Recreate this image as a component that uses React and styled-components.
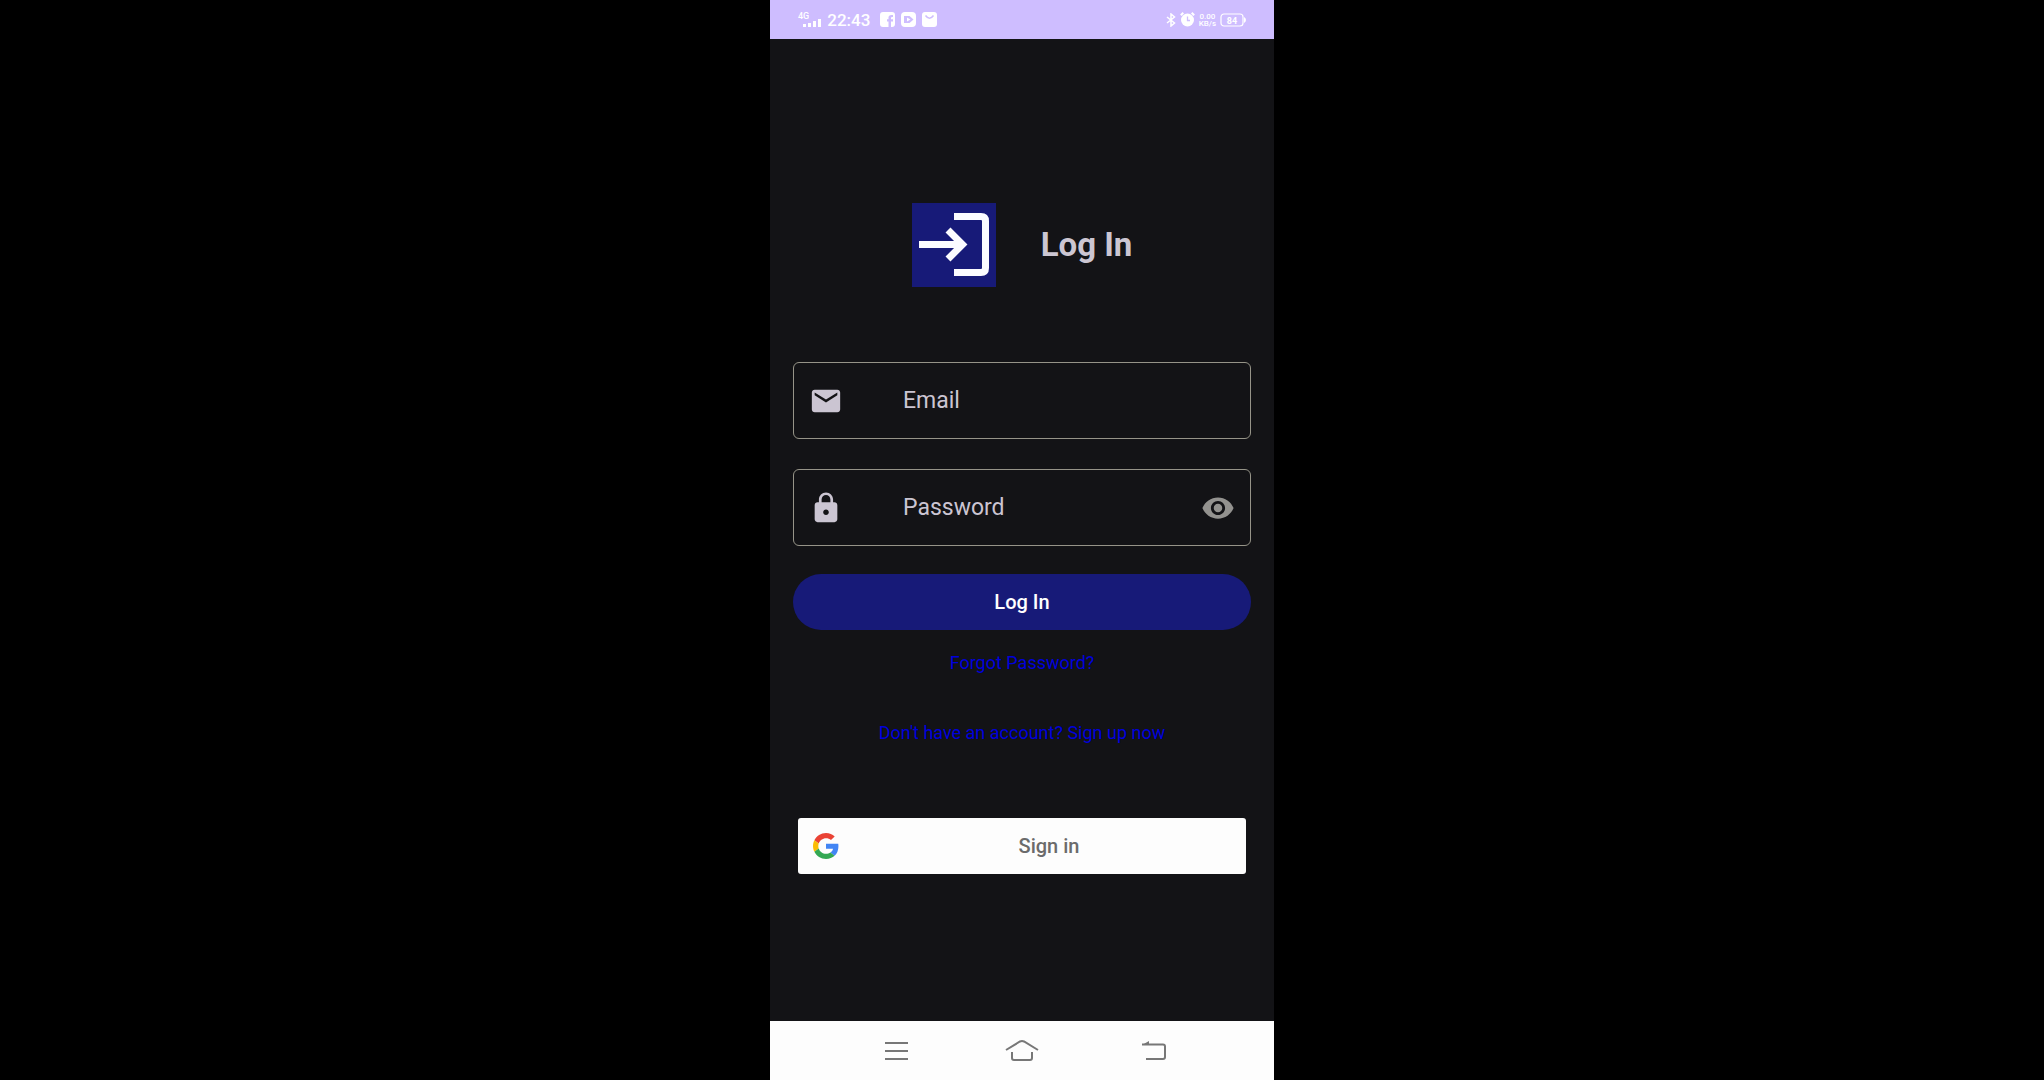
import React, { useState } from "react";
import styled, { createGlobalStyle } from "styled-components";

const GlobalStyle = createGlobalStyle`
  *, *::before, *::after { box-sizing: border-box; }
  body {
    margin: 0;
    background: #000000;
    font-family: Roboto, "Liberation Sans", sans-serif;
  }
`;

const Phone = styled.div`
  display: flex;
  flex-direction: column;
  width: 100%;
  max-width: 504px;
  min-height: 100vh;
  margin: 0 auto;
  background: #131316;
`;

const StatusBar = styled.header`
  display: flex;
  align-items: center;
  justify-content: space-between;
  height: 39px;
  padding: 0 28px;
  background: #cebdff;
  color: #ffffff;
`;

const StatusGroup = styled.div`
  display: flex;
  align-items: center;
  gap: ${(p) => p.$gap}px;
`;

const Signal = styled.div`
  display: flex;
  align-items: flex-end;
  height: 14px;
`;

const TinyText = styled.span`
  font-size: 9px;
  line-height: 7px;
  font-weight: 500;
  text-align: center;
`;

const NetworkType = styled(TinyText)`
  align-self: flex-start;
  margin-right: -6px;
`;

const Speed = styled(TinyText)`
  display: flex;
  flex-direction: column;
  font-size: 8px;
`;

const Clock = styled.time`
  margin-right: 4px;
  font-size: 17px;
  line-height: 20px;
  font-weight: 500;
`;

const Main = styled.main`
  flex: 1;
  display: flex;
  flex-direction: column;
  padding: 164px 23px 40px;
`;

const Heading = styled.div`
  display: flex;
  align-items: center;
  justify-content: center;
  gap: 45px;
  margin-bottom: 75px;
`;

const LogoTile = styled.div`
  width: 84px;
  height: 84px;
  background: #171a78;

  svg { display: block; }
`;

const Title = styled.h1`
  margin: 0;
  color: #ccc6d2;
  font-size: 33px;
  line-height: 40px;
  font-weight: 700;
`;

const Form = styled.form`
  display: flex;
  flex-direction: column;
`;

const Fields = styled.div`
  display: flex;
  flex-direction: column;
  gap: 30px;
  margin-bottom: 28px;
`;

const Field = styled.div`
  display: flex;
  align-items: center;
  height: 77px;
  padding: 0 15px;
  border: 1px solid #969488;
  border-radius: 6px;
  color: #cbc5d2;
`;

const FieldIcon = styled.label`
  display: flex;
`;

const Input = styled.input`
  flex: 1;
  min-width: 0;
  margin-left: 60px;
  padding: 0;
  border: 0;
  outline: 0;
  background: transparent;
  color: #cbc5d2;
  font: 400 23px/32px Roboto, "Liberation Sans", sans-serif;

  &::placeholder { color: #cbc5d2; opacity: 1; }
`;

const PlainButton = styled.button`
  display: flex;
  align-items: center;
  justify-content: center;
  padding: 0;
  border: 0;
  background: transparent;
  color: ${(p) => p.$color};
  cursor: pointer;
`;

const Submit = styled.button`
  height: 56px;
  border: 0;
  border-radius: 28px;
  background: #171a78;
  color: #ffffff;
  font: 500 20px/24px Roboto, "Liberation Sans", sans-serif;
  cursor: pointer;
`;

const Links = styled.nav`
  display: flex;
  flex-direction: column;
  align-items: center;
  gap: 46px;
  margin: 21px 0 73px;
`;

const TextLink = styled.a`
  color: #0000dc;
  font-size: 18px;
  line-height: 24px;
  text-decoration: none;
`;

const GoogleButton = styled.button`
  display: grid;
  grid-template-columns: 28px 1fr 28px;
  align-items: center;
  height: 56px;
  margin: 0 5px;
  padding: 0 15px;
  border: 0;
  border-radius: 3px;
  background: #fdfdfd;
  color: #6b6b6b;
  font: 500 20px/24px Roboto, "Liberation Sans", sans-serif;
  cursor: pointer;
`;

const ButtonLabel = styled.span`
  padding-left: 54px;
`;

const SystemNav = styled.footer`
  display: grid;
  grid-template-columns: repeat(3, 1fr);
  height: 59px;
  padding: 0 12.5%;
  background: #fdfdfd;
`;

const icon = { fill: "currentColor", "aria-hidden": true };
const line = { fill: "none", stroke: "currentColor", "aria-hidden": true };

const LoginLogo = () => (
  <svg width="84" height="84" viewBox="0 0 84 84" fill="none" stroke="#fbfbff" strokeWidth="7" aria-hidden="true">
    <path d="M42 13.500H69Q73.500 13.500 73.500 18V65Q73.500 69.500 69 69.500H42" />
    <path d="M7 41.500H50" />
    <path d="M36 27L50.500 41.500L36 56" />
  </svg>
);

const GoogleLogo = () => (
  <svg width="26" height="26" viewBox="0 0 48 48" aria-hidden="true">
    <path fill="#EA4335" d="M24 9.500c3.540 0 6.710 1.220 9.210 3.600l6.850-6.850C35.900 2.380 30.470 0 24 0 14.620 0 6.510 5.380 2.560 13.220l7.980 6.190C12.430 13.720 17.740 9.500 24 9.500z" />
    <path fill="#4285F4" d="M46.980 24.550c0-1.570-.15-3.090-.38-4.550H24v9.020h12.940c-.58 2.960-2.260 5.480-4.780 7.180l7.730 6c4.510-4.180 7.090-10.360 7.090-17.650z" />
    <path fill="#FBBC05" d="M10.530 28.590c-.48-1.450-.76-2.990-.76-4.590s.27-3.140.76-4.590l-7.980-6.190C.92 16.460 0 20.120 0 24c0 3.880.92 7.540 2.560 10.780l7.970-6.190z" />
    <path fill="#34A853" d="M24 48c6.480 0 11.930-2.130 15.890-5.810l-7.730-6c-2.150 1.450-4.920 2.300-8.160 2.300-6.260 0-11.570-4.220-13.470-9.910l-7.980 6.190C6.510 42.620 14.620 48 24 48z" />
  </svg>
);

export default function App() {
  const [visible, setVisible] = useState(false);

  return (
    <>
      <GlobalStyle />
      <Phone>
        <StatusBar>
          <StatusGroup $gap={6}>
            <Signal>
              <NetworkType>4G</NetworkType>
              <svg width="18" height="8" viewBox="0 0 18 8" {...icon}>
                <path d="M0 5h3v3H0zM5 4h3v4H5zM10 2h3v6h-3zM15 0h3v8h-3z" />
              </svg>
            </Signal>
            <Clock>22:43</Clock>
            <svg width="15" height="15" viewBox="0 0 15 15" {...icon}>
              <path fillRule="evenodd" d="M3 0h9a3 3 0 0 1 3 3v9a3 3 0 0 1-3 3h-1V9.500h2V7.300h-2V6q0-1 1-1h1V3h-1.500Q8.500 3 8.500 5.500v1.800H7v2.200h1.500V15H3a3 3 0 0 1-3-3V3a3 3 0 0 1 3-3z" />
            </svg>
            <svg width="15" height="15" viewBox="0 0 15 15">
              <rect width="15" height="15" rx="4" fill="#ffffff" />
              <path d="M3 4H8.500L12.500 7.500L8.500 11H3z" fill="#cebdff" />
              <path d="M6 5.500L9.500 7.500L6 9.500z" fill="#ffffff" />
            </svg>
            <svg width="15" height="15" viewBox="0 0 15 15">
              <rect width="15" height="15" rx="3" fill="#ffffff" />
              <path d="M3.500 3.500Q7.500 9 11.500 3.500" fill="none" stroke="#cebdff" strokeWidth="1.500" />
            </svg>
          </StatusGroup>
          <StatusGroup $gap={4}>
            <svg width="10" height="14" viewBox="0 0 10 14" {...line} strokeWidth="1.500">
              <path d="M1 4L8.500 10L5 13V1L8.500 4L1 10" />
            </svg>
            <svg width="15" height="15" viewBox="0 0 15 15">
              <circle cx="7.500" cy="8" r="6.500" fill="#ffffff" />
              <path d="M.8 3.300L3.300 .8M14.200 3.300L11.700 .8" stroke="#ffffff" strokeWidth="2" />
              <path d="M7.500 4.500V8.500H10" fill="none" stroke="#cebdff" strokeWidth="1.300" />
            </svg>
            <Speed>
              <span>0.00</span>
              <span>KB/s</span>
            </Speed>
            <svg width="26" height="14" viewBox="0 0 26 14" role="img" aria-label="Battery 84">
              <rect x="1" y="1" width="22" height="12" rx="3" fill="none" stroke="#ffffff" strokeWidth="1.200" />
              <path d="M24 4q2 1 2 3t-2 3z" fill="#ffffff" />
              <text x="12" y="10.500" textAnchor="middle" fontSize="9" fontWeight="700" fill="#ffffff">84</text>
            </svg>
          </StatusGroup>
        </StatusBar>

        <Main>
          <Heading>
            <LogoTile>
              <LoginLogo />
            </LogoTile>
            <Title>Log In</Title>
          </Heading>

          <Form onSubmit={(e) => e.preventDefault()}>
            <Fields>
              <Field>
                <FieldIcon htmlFor="email" aria-label="Email">
                  <svg width="34" height="34" viewBox="0 0 24 24" {...icon}>
                    <path d="M20 4H4c-1.100 0-1.990.9-1.990 2L2 18c0 1.100.9 2 2 2h16c1.100 0 2-.9 2-2V6c0-1.100-.9-2-2-2zm0 4l-8 5-8-5V6l8 5 8-5v2z" />
                  </svg>
                </FieldIcon>
                <Input id="email" type="email" placeholder="Email" aria-label="Email" />
              </Field>
              <Field>
                <FieldIcon htmlFor="password" aria-label="Password">
                  <svg width="34" height="34" viewBox="0 0 24 24" {...icon}>
                    <path d="M18 8h-1V6c0-2.760-2.240-5-5-5S7 3.240 7 6v2H6c-1.100 0-2 .9-2 2v10c0 1.100.9 2 2 2h12c1.100 0 2-.9 2-2V10c0-1.100-.9-2-2-2zm-6 9c-1.100 0-2-.9-2-2s.9-2 2-2 2 .9 2 2-.9 2-2 2zm3.100-9H8.900V6c0-1.710 1.390-3.100 3.100-3.100s3.100 1.390 3.100 3.100v2z" />
                  </svg>
                </FieldIcon>
                <Input id="password" type={visible ? "text" : "password"} placeholder="Password" aria-label="Password" />
                <PlainButton type="button" $color="#93928f" aria-label="Show password" onClick={() => setVisible(!visible)}>
                  <svg width="34" height="34" viewBox="0 0 24 24" {...icon}>
                    <path d="M12 4.500C7 4.500 2.730 7.610 1 12c1.730 4.390 6 7.500 11 7.500s9.270-3.110 11-7.500c-1.730-4.390-6-7.500-11-7.500zM12 17c-2.760 0-5-2.240-5-5s2.240-5 5-5 5 2.240 5 5-2.240 5-5 5zm0-8c-1.660 0-3 1.340-3 3s1.340 3 3 3 3-1.340 3-3-1.340-3-3-3z" />
                  </svg>
                </PlainButton>
              </Field>
            </Fields>
            <Submit type="submit">Log In</Submit>
          </Form>

          <Links aria-label="Account">
            <TextLink href="#forgot">Forgot Password?</TextLink>
            <TextLink href="#signup">Don't have an account? Sign up now</TextLink>
          </Links>

          <GoogleButton type="button">
            <GoogleLogo />
            <ButtonLabel>Sign in</ButtonLabel>
          </GoogleButton>
        </Main>

        <SystemNav>
          <PlainButton $color="#777777" aria-label="Recent apps">
            <svg width="34" height="24" viewBox="0 0 34 24" {...line} strokeWidth="2">
              <path d="M6 4H29M6 12H29M6 20H29" />
            </svg>
          </PlainButton>
          <PlainButton $color="#777777" aria-label="Home">
            <svg width="34" height="24" viewBox="0 0 34 24" {...line} strokeWidth="2">
              <path d="M1 11L15 2.500Q17 1.500 19 2.500L33 11M7 13V19Q7 21 9 21H25Q27 21 27 19V13" />
            </svg>
          </PlainButton>
          <PlainButton $color="#777777" aria-label="Back">
            <svg width="36" height="24" viewBox="0 0 36 24" {...line} strokeWidth="2">
              <path d="M12 5.500H33Q35 5.500 35 7.500V18Q35 20 33 20H16" />
              <path d="M12 6L19 2V6z" fill="currentColor" stroke="none" />
            </svg>
          </PlainButton>
        </SystemNav>
      </Phone>
    </>
  );
}
